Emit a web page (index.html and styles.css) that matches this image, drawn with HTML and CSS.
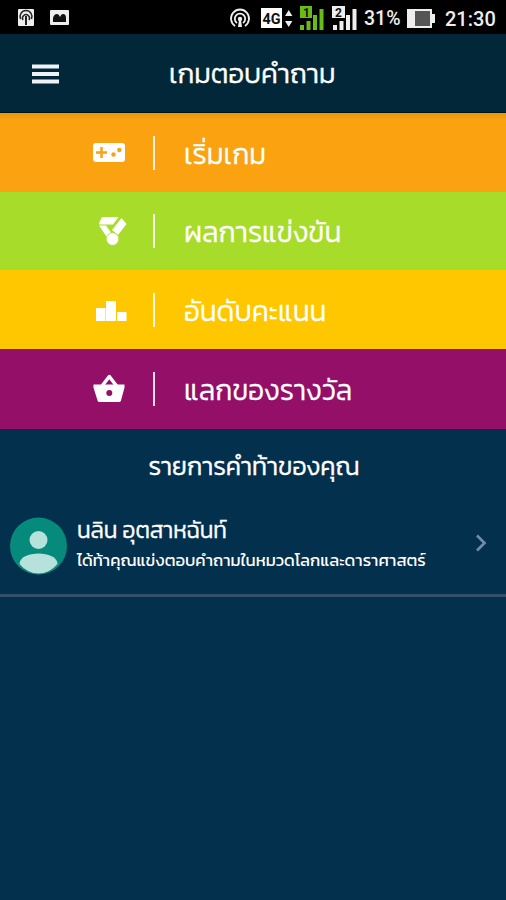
FILE: index.html
```html
<!DOCTYPE html>
<html lang="th">
<head>
<meta charset="utf-8">
<title>เกมตอบคำถาม</title>
<link rel="stylesheet" href="styles.css">
</head>
<body>
<div class="status">
  <svg class="status-icons" width="364" height="34" viewBox="0 0 364 34">
    <rect x="18" y="9" width="16" height="17" rx="1" fill="#eee"/>
    <g fill="none" stroke="#222" stroke-width="1.500"><path d="M20.500 19a6 6 0 1 1 11 0M23 20a3.500 3.500 0 1 1 6 0"/><path d="M26 16v9" stroke-width="2"/></g>
    <rect x="50" y="10" width="19" height="15" rx="1" fill="#eee"/>
    <path d="M53 22v-4q1-4 4-4 2 0 3 3 1-3 3-3 3 0 3 4v4z" fill="#111"/>
    <g fill="none" stroke="#eee" stroke-width="1.800"><path d="M235 26a9 9 0 1 1 10 0M237 23a5.200 5.200 0 1 1 6 0"/></g>
    <circle cx="240" cy="19" r="2.200" fill="#eee"/><path d="M239 20h2l1 7h-4z" fill="#eee"/>
    <rect x="261" y="8" width="21" height="20" fill="#fff"/>
    <text x="262.500" y="23.500" class="net" textLength="18" lengthAdjust="spacingAndGlyphs">4G</text>
    <path d="M285 16l3.700-6 3.700 6zM285 21h7.400l-3.700 6z" fill="#eee"/>
    <g fill="#68bd13"><rect x="300" y="6" width="12" height="12"/><rect x="300" y="25" width="4" height="5"/><rect x="306.500" y="21" width="4" height="9"/><rect x="313" y="15" width="4" height="15"/><rect x="319.500" y="9" width="4" height="21"/></g>
    <g fill="#eee"><rect x="332" y="6" width="13" height="12"/><rect x="333" y="25" width="4" height="5"/><rect x="339.500" y="21" width="4" height="9"/><rect x="346" y="15" width="4" height="15"/><rect x="352.500" y="9" width="4" height="21"/></g>
    <text x="303" y="16.500" class="sim">1</text><text x="335" y="16.500" class="sim">2</text>
  </svg>
  <span class="percent">31%</span>
  <svg class="battery" width="28" height="19" viewBox="0 0 28 19"><path d="M0 0h25v5h3v9h-3v5H0z" fill="#eee"/><rect x="8" y="2" width="15" height="15" fill="#555"/></svg>
  <span class="clock">21:30</span>
</div>
<header class="bar">
  <svg class="burger" width="27" height="20" viewBox="0 0 27 20"><path d="M0 2.500h27M0 10h27M0 17.500h27" stroke="#f0f3f5" stroke-width="3.800"/></svg>
  <h1 class="title">เกมตอบคำถาม</h1>
</header>
<nav class="menu">
  <a class="item play"><svg class="icon" width="34" height="34" viewBox="0 0 34 34"><rect x="1" y="7" width="32" height="19" rx="3" fill="#fff"/><path d="M9.500 11v11M4 16.500h11" stroke="#faa20f" stroke-width="2.500"/><circle cx="21.500" cy="18.500" r="2.200" fill="#faa20f"/><circle cx="27.300" cy="14" r="2.200" fill="#faa20f"/></svg><i class="rule"></i><span class="label">เริ่มเกม</span></a>
  <a class="item results"><svg class="icon" width="36" height="34" viewBox="0 0 36 34"><path d="M10 3h16.500l-5.500 7.500H7.500L7 9zM7 11.500h7l5 7-3.500 5.500zM29.500 4l5 6-8.500 11-6-5z" fill="#fff"/><circle cx="20.500" cy="25" r="6.300" fill="#fff" stroke="#a7dc2b" stroke-width=".7"/></svg><i class="rule"></i><span class="label">ผลการแข่งขัน</span></a>
  <a class="item rank"><svg class="icon" width="36" height="34" viewBox="0 0 36 34"><path d="M4 15h9.500v13H4zM14 8h10v20h-10zM25 19h9.500v9H25z" fill="#fff"/></svg><i class="rule"></i><span class="label">อันดับคะแนน</span></a>
  <a class="item reward"><svg class="icon" width="34" height="34" viewBox="0 0 34 34"><path d="M10 14l7.300-9.500 7.300 9.500" fill="none" stroke="#fff" stroke-width="3.500" stroke-linejoin="round"/><path d="M1.500 12.500h31v3L29 28.500q-.5 1.500-2 1.500H7.500q-1.500 0-2-1.500L1.500 15.500z" fill="#fff"/><circle cx="17.300" cy="21" r="3" fill="#930f68"/></svg><i class="rule"></i><span class="label">แลกของรางวัล</span></a>
</nav>
<main>
  <h2 class="heading">รายการคำท้าของคุณ</h2>
  <div class="challenge">
    <svg class="avatar" width="58" height="58" viewBox="0 0 58 58"><circle cx="28.500" cy="29" r="28.500" fill="#058a7b"/><circle cx="28.500" cy="23" r="9" fill="#b7e2dc"/><path d="M9.500 47c0-14 38-14 38 0q-8 9.500-19 9.500T9.500 47z" fill="#b7e2dc"/></svg>
    <div class="info"><span class="name">นลิน อุตสาหฉันท์</span><span class="desc">ได้ท้าคุณแข่งตอบคำถามในหมวดโลกและดาราศาสตร์</span></div>
    <svg class="chevron" width="12" height="18" viewBox="0 0 12 18"><path d="M2 1.500L9.500 9 2 16.500" fill="none" stroke="#718da3" stroke-width="2.700"/></svg>
  </div>
</main>
</body>
</html>
```
FILE: styles.css
```css
* { box-sizing: border-box; }
body { margin: 0; width: 506px; height: 900px; overflow: hidden; background: #03304d; color: #fff; font-family: Kanit, Prompt, "Noto Sans Thai", "Noto Sans", "Liberation Sans", sans-serif; }
h1, h2 { margin: 0; font-weight: 400; }
svg { display: block; flex: none; }
.status { height: 34px; background: #000; display: flex; align-items: center; font-family: Roboto, sans-serif; color: #eee; }
.net { font: 700 15px Roboto, sans-serif; fill: #111; }
.sim { font: 700 12px Roboto, sans-serif; fill: #111; }
.percent { width: 43px; font-size: 19.5px; font-weight: 500; padding-top: 3px; }
.clock { font-size: 20px; font-weight: 500; margin-left: 10px; padding-top: 3px; white-space: nowrap; }
.battery { margin-top: 2px; }
.bar { height: 79px; background: #022739; border-bottom: 1px solid #061019; display: flex; align-items: center; padding: 2px 0 0 32px; }
.title { margin-left: 110px; font-size: 27.7px; line-height: 40px; white-space: nowrap; font-weight: 300; -webkit-text-stroke: .4px #fff; }
.item { height: 79px; display: flex; align-items: center; padding-left: 92px; }
.item.results { height: 78px; }
.play { background: linear-gradient(#e8970f, #faa20f 7px); }
.results { background: #a7dc2b; }
.rank { background: #fec700; }
.reward { background: #930f68; height: 80px; }
.rule { width: 2px; height: 34px; margin-left: 27px; background: #fff; opacity: .85; }
.results .rule, .rank .rule { margin-left: 25px; }
.label { margin-left: 29px; padding-top: 2px; font-size: 28.1px; font-weight: 300; line-height: 40px; white-space: nowrap; -webkit-text-stroke: .3px #fff; }
.heading { text-align: center; height: 76px; line-height: 74px; font-size: 25.1px; padding-left: 2px; font-weight: 300; -webkit-text-stroke: .4px #fff; }
.challenge { display: flex; height: 92px; border-bottom: 3px solid #345069; padding: 12px 18px 0 10px; }
.info { display: flex; flex-direction: column; margin-left: 9px; width: 390px; white-space: nowrap; }
.name { font-size: 22.700px; line-height: 27px; font-weight: 300; -webkit-text-stroke: .4px #fff; }
.desc { font-size: 16.7px; line-height: 33px; }
.chevron { margin: 17px 0 0 8px; }
```
